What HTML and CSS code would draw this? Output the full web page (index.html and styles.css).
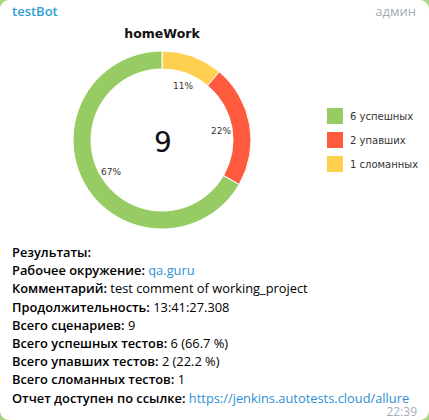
FILE: index.html
```html
<!DOCTYPE html>
<html>
<head>
<meta charset="utf-8">
<link rel="stylesheet" href="styles.css">
</head>
<body>
<div class="bubble">
  <div class="head">
    <span class="name">testBot</span>
    <span class="role">админ</span>
  </div>
  <svg class="chart" width="429" height="221" viewBox="0 0 429 221">
    <text class="title" x="162" y="15.5" text-anchor="middle">homeWork</text>
    <path d="M162,29 A89,89 0 0 1 219.21,49.83 L207.64,63.61 A71,71 0 0 0 162,47 Z" fill="#ffd050" stroke="#fff" stroke-width="1"/>
    <path d="M219.21,49.83 A89,89 0 0 1 239.08,162.5 L223.49,153.5 A71,71 0 0 0 207.64,63.61 Z" fill="#fd5a3e" stroke="#fff" stroke-width="1"/>
    <path d="M239.08,162.5 A89,89 0 1 1 162,29 L162,47 A71,71 0 1 0 223.49,153.5 Z" fill="#97cc64" stroke="#fff" stroke-width="1"/>
    <text class="pct" x="183" y="66.5" text-anchor="middle">11%</text>
    <text class="pct" x="221" y="111.5" text-anchor="middle">22%</text>
    <text class="pct" x="111" y="152.5" text-anchor="middle">67%</text>
    <text class="big" x="163" y="130" text-anchor="middle">9</text>
    <rect x="327" y="86" width="16" height="16" fill="#97cc64"/>
    <rect x="327" y="110" width="16" height="16" fill="#fd5a3e"/>
    <rect x="327" y="134" width="16" height="16" fill="#ffd050"/>
    <text class="leg" x="350" y="97.5">6 успешных</text>
    <text class="leg" x="350" y="121.5">2 упавших</text>
    <text class="leg" x="350" y="145.5">1 сломанных</text>
  </svg>
  <div class="body">
    <div><b>Результаты:</b></div>
    <div><b>Рабочее окружение:</b> <a class="link">qa.guru</a></div>
    <div><b>Комментарий:</b> test comment of working_project</div>
    <div><b>Продолжительность:</b> 13:41:27.308</div>
    <div><b>Всего сценариев:</b> 9</div>
    <div><b>Всего успешных тестов:</b> 6 (66.7 %)</div>
    <div><b>Всего упавших тестов:</b> 2 (22.2 %)</div>
    <div><b>Всего сломанных тестов:</b> 1</div>
    <div><b>Отчет доступен по ссылке:</b> <a class="link">https://jenkins.autotests.cloud/allure</a></div>
  </div>
  <div class="time">22:39</div>
</div>
</body>
</html>
```

FILE: styles.css
```css
html, body {
  margin: 0;
  padding: 0;
}
body {
  background: #a8d67e;
  width: 429px;
  height: 420px;
  overflow: hidden;
  font-family: "Open Sans", "Noto Sans", sans-serif;
}
.bubble {
  background: #fff;
  width: 429px;
  height: 420px;
  border-radius: 9px;
  box-sizing: border-box;
}
.head {
  height: 22px;
  display: flex;
  justify-content: space-between;
  align-items: center;
  padding: 0 13px 0 12px;
  font-size: 13px;
}
.name {
  color: #2f9fd2;
  font-weight: 600;
}
.role {
  color: #a3adb6;
}
.chart {
  display: block;
}
.title {
  font-family: "DejaVu Sans", sans-serif;
  font-weight: bold;
  font-size: 12.5px;
  fill: #111;
}
.pct {
  font-family: "DejaVu Sans", sans-serif;
  font-size: 9px;
  fill: #333;
}
.big {
  font-family: "DejaVu Sans", sans-serif;
  font-size: 28px;
  fill: #111;
}
.leg {
  font-family: "DejaVu Sans", sans-serif;
  font-size: 10px;
  fill: #333;
}
.body {
  padding: 0 12px;
  font-size: 12.85px;
  line-height: 18.2px;
  color: #000;
}
.body b {
  font-weight: 600;
}
.link {
  color: #2f8fd4;
}
.time {
  text-align: right;
  padding-right: 12px;
  font-size: 12px;
  line-height: 12px;
  margin-top: -1px;
  color: #a3adb6;
}
```
